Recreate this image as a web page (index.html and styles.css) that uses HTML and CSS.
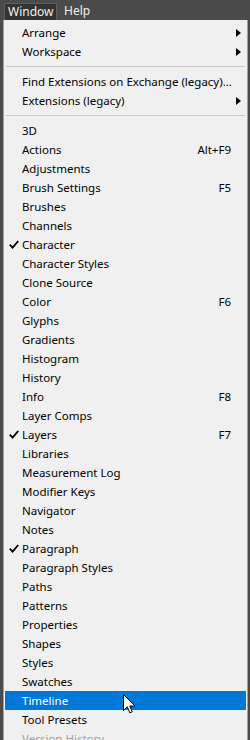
FILE: index.html
```html
<!doctype html>
<html>
<head>
<meta charset="utf-8">
<title>Window menu</title>
<link rel="stylesheet" href="styles.css">
</head>
<body>

<div class="menubar">
<span class="barItem active">Window</span>
<span class="barItem">Help</span>
</div>

<div class="menu">
<div class="row"><span class="label">Arrange</span><svg class="sub" width="5" height="8" viewBox="0 0 5 8"><path d="M0 0L5 4L0 8Z"/></svg></div>
<div class="row"><span class="label">Workspace</span><svg class="sub" width="5" height="8" viewBox="0 0 5 8"><path d="M0 0L5 4L0 8Z"/></svg></div>
<div class="sep"></div>
<div class="row"><span class="label">Find Extensions on Exchange (legacy)...</span></div>
<div class="row"><span class="label">Extensions (legacy)</span><svg class="sub" width="5" height="8" viewBox="0 0 5 8"><path d="M0 0L5 4L0 8Z"/></svg></div>
<div class="sep"></div>
<div class="row"><span class="label">3D</span></div>
<div class="row"><span class="label">Actions</span><span class="key">Alt+F9</span></div>
<div class="row"><span class="label">Adjustments</span></div>
<div class="row"><span class="label">Brush Settings</span><span class="key">F5</span></div>
<div class="row"><span class="label">Brushes</span></div>
<div class="row"><span class="label">Channels</span></div>
<div class="row"><svg class="check" width="10" height="9" viewBox="0 0 10 9"><path d="M0.8 4.6L3.6 7.6L9.2 1" fill="none" stroke="#000" stroke-width="1.9"/></svg><span class="label">Character</span></div>
<div class="row"><span class="label">Character Styles</span></div>
<div class="row"><span class="label">Clone Source</span></div>
<div class="row"><span class="label">Color</span><span class="key">F6</span></div>
<div class="row"><span class="label">Glyphs</span></div>
<div class="row"><span class="label">Gradients</span></div>
<div class="row"><span class="label">Histogram</span></div>
<div class="row"><span class="label">History</span></div>
<div class="row"><span class="label">Info</span><span class="key">F8</span></div>
<div class="row"><span class="label">Layer Comps</span></div>
<div class="row"><svg class="check" width="10" height="9" viewBox="0 0 10 9"><path d="M0.8 4.6L3.6 7.6L9.2 1" fill="none" stroke="#000" stroke-width="1.9"/></svg><span class="label">Layers</span><span class="key">F7</span></div>
<div class="row"><span class="label">Libraries</span></div>
<div class="row"><span class="label">Measurement Log</span></div>
<div class="row"><span class="label">Modifier Keys</span></div>
<div class="row"><span class="label">Navigator</span></div>
<div class="row"><span class="label">Notes</span></div>
<div class="row"><svg class="check" width="10" height="9" viewBox="0 0 10 9"><path d="M0.8 4.6L3.6 7.6L9.2 1" fill="none" stroke="#000" stroke-width="1.9"/></svg><span class="label">Paragraph</span></div>
<div class="row"><span class="label">Paragraph Styles</span></div>
<div class="row"><span class="label">Paths</span></div>
<div class="row"><span class="label">Patterns</span></div>
<div class="row"><span class="label">Properties</span></div>
<div class="row"><span class="label">Shapes</span></div>
<div class="row"><span class="label">Styles</span></div>
<div class="row"><span class="label">Swatches</span></div>
<div class="row hover"><span class="label">Timeline</span>
<svg class="cursor" width="13" height="22" viewBox="0 0 13 22"><path d="M0.5 0.5L0.5 16.5L4.3 12.8L6.8 18.8L9.2 17.8L6.8 12L12 12Z" fill="#fff" stroke="#000" stroke-width="1" stroke-linejoin="miter"/></svg>
</div>
<div class="row"><span class="label">Tool Presets</span></div>
<div class="row disabled"><span class="label">Version History</span></div>
</div>

</body>
</html>
```

FILE: styles.css
```css
body {margin: 0; height: 740px; overflow: hidden; background: #4b4b4b; font: 11.5px "Noto Sans", "Liberation Sans", sans-serif; color: #000;}
.menubar {height: 20px; display: flex; align-items: flex-end; padding-left: 4px;}
.barItem {height: 17px; line-height: 15px; color: #f0f0f0; font-size: 12px; box-sizing: border-box;}
.barItem.active {background: #333; border: 1px solid #5e5e5e; border-bottom: 0; width: 53px; padding: 0 3px;}
.barItem + .barItem {margin-left: 7px;}
.menu {margin-left: 3px; width: 245px; box-sizing: border-box; background: #f0f0f0; border: 1px solid #a0a0a0; border-top: 0; padding: 3px 1px 0;}
.row {position: relative; height: 19px; display: flex; align-items: center; padding: 0 15px 0 17px;}
.label {flex: 1; white-space: nowrap; line-height: 19px;}
.key {white-space: nowrap;}
.sub {position: absolute; right: 5px; top: 6px;}
.check {position: absolute; left: 4px; top: 5px;}
.sep {height: 11px; display: flex; align-items: center;}
.sep::before {content: ""; flex: 1; height: 1px; background: #c8c8c8; margin: 0 1px;}
.hover {background: #0078d7; color: #fff;}
.cursor {position: absolute; left: 118px; top: 3px;}
.disabled {color: #a0a0a0;}
```
